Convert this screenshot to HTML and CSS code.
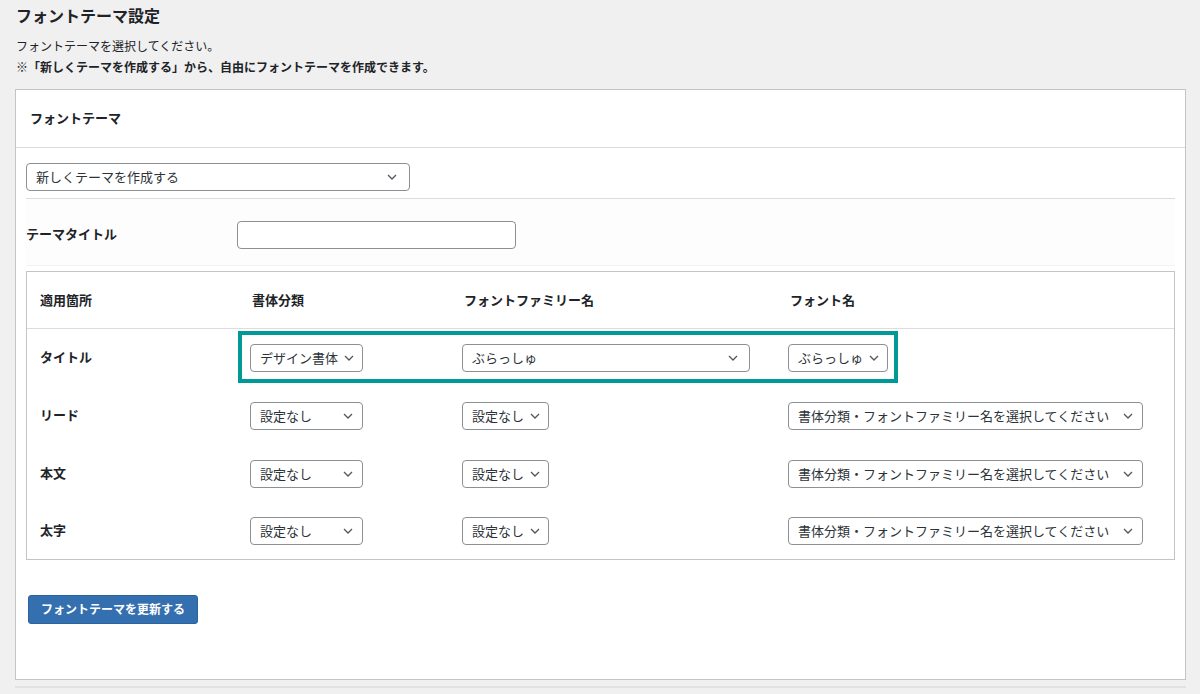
FILE: index.html
```html
<!DOCTYPE html>
<html lang="ja">
<head>
<meta charset="utf-8">
<title>フォントテーマ設定</title>
<link rel="stylesheet" href="styles.css">
</head>
<body>
<div class="page">
  <h1 class="page-title">フォントテーマ設定</h1>
  <p class="desc">フォントテーマを選択してください。<br><strong>※「新しくテーマを作成する」から、自由にフォントテーマを作成できます。</strong></p>

  <div class="panel">
    <div class="panel-head">フォントテーマ</div>
    <div class="panel-body">
      <div class="theme-select-row">
        <div class="select w-main"><span>新しくテーマを作成する</span><svg class="chev" width="10" height="6" viewBox="0 0 10 6"><path d="M1 1l4 4 4-4" fill="none" stroke="#50575e" stroke-width="1.3"/></svg></div>
      </div>

      <div class="title-row">
        <div class="title-label">テーマタイトル</div>
        <div class="text-input"></div>
      </div>

      <div class="font-table">
        <div class="ft-row ft-head">
          <div class="c1">適用箇所</div>
          <div class="c2"><span class="th">書体分類</span></div>
          <div class="c3"><span class="th">フォントファミリー名</span></div>
          <div class="c4"><span class="th">フォント名</span></div>
        </div>

        <div class="ft-row ft-data">
          <div class="c1 label">タイトル</div>
          <div class="c2"><div class="select w-cat"><span>デザイン書体</span><svg class="chev" width="10" height="6" viewBox="0 0 10 6"><path d="M1 1l4 4 4-4" fill="none" stroke="#50575e" stroke-width="1.3"/></svg></div></div>
          <div class="c3"><div class="select w-fam"><span>ぶらっしゅ</span><svg class="chev" width="10" height="6" viewBox="0 0 10 6"><path d="M1 1l4 4 4-4" fill="none" stroke="#50575e" stroke-width="1.3"/></svg></div></div>
          <div class="c4"><div class="select w-font"><span>ぶらっしゅ</span><svg class="chev" width="10" height="6" viewBox="0 0 10 6"><path d="M1 1l4 4 4-4" fill="none" stroke="#50575e" stroke-width="1.3"/></svg></div></div>
          <div class="highlight"></div>
        </div>

        <div class="ft-row ft-data">
          <div class="c1 label">リード</div>
          <div class="c2"><div class="select w-cat"><span>設定なし</span><svg class="chev" width="10" height="6" viewBox="0 0 10 6"><path d="M1 1l4 4 4-4" fill="none" stroke="#50575e" stroke-width="1.3"/></svg></div></div>
          <div class="c3"><div class="select w-none"><span>設定なし</span><svg class="chev" width="10" height="6" viewBox="0 0 10 6"><path d="M1 1l4 4 4-4" fill="none" stroke="#50575e" stroke-width="1.3"/></svg></div></div>
          <div class="c4"><div class="select w-long"><span>書体分類・フォントファミリー名を選択してください</span><svg class="chev" width="10" height="6" viewBox="0 0 10 6"><path d="M1 1l4 4 4-4" fill="none" stroke="#50575e" stroke-width="1.3"/></svg></div></div>
        </div>

        <div class="ft-row ft-data">
          <div class="c1 label">本文</div>
          <div class="c2"><div class="select w-cat"><span>設定なし</span><svg class="chev" width="10" height="6" viewBox="0 0 10 6"><path d="M1 1l4 4 4-4" fill="none" stroke="#50575e" stroke-width="1.3"/></svg></div></div>
          <div class="c3"><div class="select w-none"><span>設定なし</span><svg class="chev" width="10" height="6" viewBox="0 0 10 6"><path d="M1 1l4 4 4-4" fill="none" stroke="#50575e" stroke-width="1.3"/></svg></div></div>
          <div class="c4"><div class="select w-long"><span>書体分類・フォントファミリー名を選択してください</span><svg class="chev" width="10" height="6" viewBox="0 0 10 6"><path d="M1 1l4 4 4-4" fill="none" stroke="#50575e" stroke-width="1.3"/></svg></div></div>
        </div>

        <div class="ft-row ft-data last">
          <div class="c1 label">太字</div>
          <div class="c2"><div class="select w-cat"><span>設定なし</span><svg class="chev" width="10" height="6" viewBox="0 0 10 6"><path d="M1 1l4 4 4-4" fill="none" stroke="#50575e" stroke-width="1.3"/></svg></div></div>
          <div class="c3"><div class="select w-none"><span>設定なし</span><svg class="chev" width="10" height="6" viewBox="0 0 10 6"><path d="M1 1l4 4 4-4" fill="none" stroke="#50575e" stroke-width="1.3"/></svg></div></div>
          <div class="c4"><div class="select w-long"><span>書体分類・フォントファミリー名を選択してください</span><svg class="chev" width="10" height="6" viewBox="0 0 10 6"><path d="M1 1l4 4 4-4" fill="none" stroke="#50575e" stroke-width="1.3"/></svg></div></div>
        </div>
      </div>

      <div class="btn-row">
        <button class="btn-primary" type="button">フォントテーマを更新する</button>
      </div>
    </div>
  </div>
  <div class="footer-line"></div>
</div>
</body>
</html>
```

FILE: styles.css
```css
* { box-sizing: border-box; }

html, body {
  margin: 0;
  padding: 0;
}

body {
  background: #f0f0f1;
  color: #1d2327;
  font-family: "Noto Sans CJK JP", "Noto Sans", sans-serif;
  font-size: 13px;
}

.page {
  padding: 5px 14px 0 15px;
  height: 694px;
  overflow: hidden;
}

.page-title {
  margin: 0;
  font-size: 16px;
  line-height: 20px;
  font-weight: 700;
  padding-left: 1px;
}

.desc {
  margin: 10px 0 0;
  padding-left: 1px;
  font-size: 12px;
  line-height: 21px;
}

.desc strong { font-weight: 700; }

.panel {
  margin-top: 12px;
  background: #fff;
  border: 1px solid #c3c4c7;
}

.panel-head {
  height: 58px;
  display: flex;
  align-items: center;
  padding: 0 0 3px 14px;
  font-weight: 700;
  font-size: 13px;
  border-bottom: 1px solid #dcdcde;
}

.panel-body {
  padding: 15px 10px 55px;
}

.theme-select-row {
  padding-bottom: 7px;
  border-bottom: 1px solid #dcdcde;
}

.select {
  height: 28px;
  border: 1px solid #8c8f94;
  border-radius: 4px;
  background: #fff;
  display: flex;
  align-items: center;
  justify-content: space-between;
  padding: 0 9px 2px 9px;
  font-size: 13px;
  color: #2c3338;
  white-space: nowrap;
}

.select span { line-height: 1; }
.chev { flex: none; margin-left: 6px; margin-top: 2px; }

.w-main { width: 384px; padding-right: 12px; }
.w-cat { width: 113px; }
.w-fam { width: 288px; padding-right: 11px; }
.w-none { width: 87px; }
.w-font { width: 100px; }
.w-long { width: 355px; }

.title-row {
  display: flex;
  align-items: center;
  padding: 22px 0 16px;
  background: #fdfdfd;
  border-bottom: 1px solid #f3f3f4;
}

.title-label {
  width: 211px;
  font-weight: 700;
  padding-bottom: 3px;
}

.text-input {
  width: 279px;
  height: 28px;
  border: 1px solid #8c8f94;
  border-radius: 4px;
  background: #fff;
}

.font-table {
  margin-top: 5px;
  border: 1px solid #c3c4c7;
}

.ft-row {
  display: grid;
  grid-template-columns: 210px 212px 326px 1fr;
  align-items: center;
  padding-left: 13px;
  position: relative;
}

.ft-head {
  height: 57px;
  border-bottom: 1px solid #dcdcde;
  font-weight: 700;
  padding-bottom: 2px;
}

.th { padding-left: 2px; }

.ft-data {
  height: 58px;
}

.ft-data.last { height: 56px; }

.label { font-weight: 700; padding-bottom: 3px; }

.highlight {
  position: absolute;
  left: 211px;
  top: 2px;
  width: 660px;
  height: 52px;
  border: 4px solid #009a96;
  pointer-events: none;
}

.btn-row {
  margin-top: 35px;
  padding-left: 2px;
}

.btn-primary {
  height: 29px;
  padding: 0 12px 2px;
  background: #3470b0;
  border: 1px solid #2b639f;
  border-radius: 3px;
  color: #fff;
  font-family: "Noto Sans CJK JP", "Noto Sans", sans-serif;
  font-size: 12px;
  font-weight: 700;
  cursor: pointer;
}

.footer-line {
  margin-top: 6px;
  height: 2px;
  background: #e2e2e4;
}
```
